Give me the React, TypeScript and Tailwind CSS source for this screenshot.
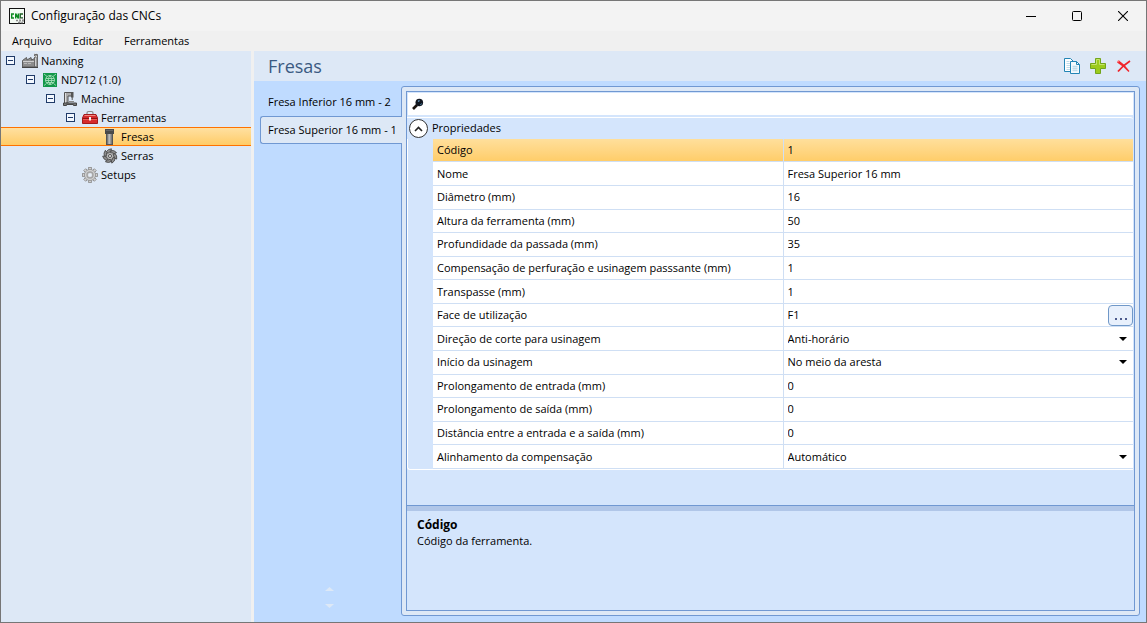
import { useState } from "react";
import type { ReactNode } from "react";

/* ─── Icons ─── */

function AppIcon() {
  return (
    <svg width="16" height="16" viewBox="0 0 16 16">
      <rect x="0.5" y="0.5" width="15" height="15" fill="#f4fbf4" stroke="#111" />
      <g fill="none" stroke="#0b8a1e" strokeWidth="1.4">
        <path d="M5 6H2.7v4H5" />
        <path d="M6.7 10.5v-5l2.6 5v-5" />
      </g>
      <path d="M14 6h-2.8v4H14" fill="none" stroke="#1c5e25" strokeWidth="1.4" />
      <path d="M7 12.5h8M9 14.5h6" stroke="#8a8a8a" strokeWidth="1.5" strokeDasharray="2 1" />
      <circle cx="12.5" cy="12.5" r="2" fill="none" stroke="#aaa" />
    </svg>
  );
}

function FactoryIcon() {
  return (
    <svg width="16" height="16" viewBox="0 0 16 16">
      <path
        d="M0.500 14V7.500L4.500 4.500L5 7L9 4.500L9.500 7L12.500 5.500V14Z"
        fill="#8d8d8d"
        stroke="#5d5d5d"
      />
      <path d="M1 8.500h12" stroke="#cfcfcf" />
      <path d="M2 10.500h3M6 10.500h3" stroke="#b9b9b9" />
      <path d="M12.500 14V1.500h3V14Z" fill="#9a9a9a" stroke="#6a6a6a" />
      <path d="M12 0.500h4M12 3.500h4" stroke="#d9d9d9" strokeDasharray="1 1" />
      <path d="M13.500 5v8" stroke="#d0d0d0" />
      <path d="M0 14.500h16" stroke="#444" />
    </svg>
  );
}

function ControllerIcon() {
  return (
    <svg width="14" height="14" viewBox="0 0 14 14">
      <rect width="14" height="14" fill="#13974a" />
      <g fill="none" stroke="#a5dcb8" strokeWidth="0.900">
        <circle cx="7" cy="7" r="4.500" />
        <path d="M3 5.500h8M2.500 7.500h9M3.500 9.500h7" />
        <path d="M7 2.500q-3.500 4.500 0 9M7 2.500q3.500 4.500 0 9" />
        <path d="M1 1l3 2.500M13 1l-3 2.500M1 12.500l2.500-2M13 12.500l-2.500-2" />
      </g>
    </svg>
  );
}

function MachineIcon() {
  return (
    <svg width="16" height="16" viewBox="0 0 16 16">
      <path d="M2.5 12V1.5h8V5H6v7Z" fill="#aaa" stroke="#555" />
      <path d="M3.5 2v10" stroke="#ddd" />
      <path d="M9 1h2.5v5.5h-2.5z" fill="#555" />
      <path d="M10.2 6v3" stroke="#555" />
      <path d="M7 10.5h5" stroke="#888" />
      <path d="M1.5 14.5v-2.500h13v2.500h-3v-1h-7v1Z" fill="#777" stroke="#444" />
    </svg>
  );
}

function ToolboxIcon() {
  return (
    <svg width="16" height="16" viewBox="0 0 16 16">
      <path d="M5 5V3q0-1.500 1.500-1.500h3q1.500 0 1.500 1.500v2" fill="none" stroke="#8a8a8a" strokeWidth="1.2" />
      <path d="M2 4.500h12L15.500 8v5.500h-15V8Z" fill="#d62a2c" stroke="#a3191d" />
      <path d="M2.500 5.500h11" stroke="#f08a80" />
      <path d="M1 8.500h14" stroke="#8f1216" />
      <path d="M1 9.500h14" stroke="#ee5a54" />
      <rect x="7" y="7" width="2" height="3.500" fill="#f3f3f3" />
    </svg>
  );
}

function MillIcon() {
  return (
    <svg width="16" height="16" viewBox="0 0 16 16">
      <defs>
        <linearGradient id="mill">
          <stop offset="0" stopColor="#4d4d4d" />
          <stop offset="0.45" stopColor="#c4c4c4" />
          <stop offset="1" stopColor="#5c5c5c" />
        </linearGradient>
      </defs>
      <rect x="4.5" y="4.5" width="6" height="11" fill="url(#mill)" stroke="#555" />
      <rect x="3" y="0" width="9" height="5" fill="#4a4a4a" />
      <path d="M4 1.500h7" stroke="#666" />
    </svg>
  );
}

function SawIcon() {
  const blades = [0, 51, 103, 154, 206, 257, 309];
  return (
    <svg width="16" height="16" viewBox="0 0 16 16">
      <circle cx="8" cy="8" r="5" fill="#a6a6a6" />
      {blades.map((a) => (
        <path
          key={a}
          d="M4.500 3.500Q6 1 9.500 0.800L8.800 3.300Q6.800 3.500 6.300 6Z"
          fill="#8f8f8f"
          stroke="#454545"
          strokeWidth="0.8"
          transform={`rotate(${a} 8 8)`}
        />
      ))}
      <circle cx="8" cy="8" r="3" fill="#b9b9b9" />
      <circle cx="8" cy="8" r="1.5" fill="#f2f2f2" stroke="#444" strokeWidth="0.9" />
    </svg>
  );
}

function GearIcon() {
  const teeth = [0, 45, 90, 135, 180, 225, 270, 315];
  return (
    <svg width="16" height="16" viewBox="0 0 16 16">
      {teeth.map((a) => (
        <rect
          key={a}
          x="6.600"
          y="0.500"
          width="2.800"
          height="4"
          fill="#d2d2d2"
          stroke="#929292"
          strokeWidth="0.9"
          transform={`rotate(${a} 8 8)`}
        />
      ))}
      <circle cx="8" cy="8" r="5.500" fill="#d2d2d2" stroke="#929292" strokeWidth="0.9" />
      <circle cx="8" cy="8" r="4.800" fill="#d2d2d2" />
      <circle cx="8" cy="8" r="3" fill="none" stroke="#a4a4a4" strokeWidth="1.4" />
      <circle cx="8" cy="8" r="1.800" fill="#e4edf8" />
    </svg>
  );
}

function CopyIcon() {
  return (
    <svg width="16" height="16" viewBox="0 0 16 16">
      <path d="M0.5 0.5h6l2.5 2.5v10.500h-8.500Z" fill="#fff" stroke="#2385b5" />
      <path d="M2.500 3.500h3M2.500 5.500h4M2.500 7.500h4M2.500 9.500h4M2.500 11.500h4" stroke="#bfdcea" />
      <path d="M6.5 3.5h6l3 3v9h-9Z" fill="#f4fafd" stroke="#2385b5" />
      <path d="M12.5 3.5v3h3" fill="none" stroke="#2385b5" />
      <path d="M8.5 8.5h5M8.5 10.5h5M8.5 12.5h5" stroke="#bfdcea" strokeWidth="1.3" />
    </svg>
  );
}

function PlusIcon() {
  return (
    <svg width="16" height="16" viewBox="0 0 16 16">
      <path
        d="M5.5 0.5h5v5h5v5h-5v5h-5v-5h-5v-5h5Z"
        fill="#9ccb1c"
        stroke="#72a51c"
      />
      <path d="M6.5 6.5V1.5h3v5h5" fill="none" stroke="#c5e56a" />
      <path d="M1.5 6.5h5" stroke="#c5e56a" />
    </svg>
  );
}

function DeleteIcon() {
  return (
    <svg width="16" height="16" viewBox="0 0 16 16">
      <path d="M1 4.500L3 2.500Q9 6.500 13.500 13L12.500 14Q7 8 1 4.500Z" fill="#f2262d" />
      <path d="M14 3Q7 7.500 2 13.500" fill="none" stroke="#ee2329" strokeWidth="1.8" />
      <path d="M1.500 4l1.500-1.500" stroke="#ff7a7e" strokeWidth="1.5" />
    </svg>
  );
}

function SearchIcon() {
  return (
    <svg width="12" height="12" viewBox="0 0 12 12">
      <path d="M1 11L5 7" stroke="#1b1410" strokeWidth="2.6" />
      <circle cx="7.3" cy="4.5" r="3.8" fill="#10151f" />
      <path d="M6 3.5l1.5-1" stroke="#6da1c9" strokeWidth="1.3" />
      <path d="M8 7l2-1.5" stroke="#3d6d8f" />
    </svg>
  );
}

function DropArrow() {
  return (
    <svg width="8" height="4" viewBox="0 0 8 4" className="pointer-events-none shrink-0">
      <path d="M0 0h8L4 4Z" fill="#000" />
    </svg>
  );
}

/* ─── Data ─── */

interface TreeNode {
  label: string;
  level: number;
  icon: ReactNode;
  leaf?: boolean;
}

const tree: TreeNode[] = [
  { label: "Nanxing", level: 0, icon: <FactoryIcon /> },
  { label: "ND712 (1.0)", level: 1, icon: <ControllerIcon /> },
  { label: "Machine", level: 2, icon: <MachineIcon /> },
  { label: "Ferramentas", level: 3, icon: <ToolboxIcon /> },
  { label: "Fresas", level: 4, icon: <MillIcon />, leaf: true },
  { label: "Serras", level: 4, icon: <SawIcon />, leaf: true },
  { label: "Setups", level: 3, icon: <GearIcon />, leaf: true },
];

const indents = ["pl-[5px]", "pl-[25px]", "pl-[45px]", "pl-[65px]", "pl-[85px]"];

interface Property {
  id: string;
  label: string;
  value: string;
  kind?: "select" | "dialog";
}

const properties: Property[] = [
  { id: "codigo", label: "Código", value: "1" },
  { id: "nome", label: "Nome", value: "Fresa Superior 16 mm" },
  { id: "diametro", label: "Diâmetro (mm)", value: "16" },
  { id: "altura", label: "Altura da ferramenta (mm)", value: "50" },
  { id: "profundidade", label: "Profundidade da passada (mm)", value: "35" },
  {
    id: "compensacao",
    label: "Compensação de perfuração e usinagem passsante (mm)",
    value: "1",
  },
  { id: "transpasse", label: "Transpasse (mm)", value: "1" },
  { id: "face", label: "Face de utilização", value: "F1", kind: "dialog" },
  { id: "direcao", label: "Direção de corte para usinagem", value: "Anti-horário", kind: "select" },
  { id: "inicio", label: "Início da usinagem", value: "No meio da aresta", kind: "select" },
  { id: "entrada", label: "Prolongamento de entrada (mm)", value: "0" },
  { id: "saida", label: "Prolongamento de saída (mm)", value: "0" },
  { id: "distancia", label: "Distância entre a entrada e a saída (mm)", value: "0" },
  { id: "alinhamento", label: "Alinhamento da compensação", value: "Automático", kind: "select" },
];

const tools = ["Fresa Inferior 16 mm - 2", "Fresa Superior 16 mm - 1"];

/* ─── Window chrome ─── */

function TitleBar() {
  return (
    <header className="flex h-[30px] shrink-0 items-center bg-[#f3f3f3] pl-2 text-black">
      <AppIcon />
      <h1 className="ml-1.5 text-[12px]">Configuração das CNCs</h1>
      <div className="ml-auto flex h-full">
        <button aria-label="Minimizar" className="flex w-[46px] items-center justify-center">
          <svg width="10" height="10" viewBox="0 0 10 10">
            <path d="M0 5.5h10" stroke="#000" />
          </svg>
        </button>
        <button aria-label="Maximizar" className="flex w-[46px] items-center justify-center">
          <svg width="10" height="10" viewBox="0 0 10 10">
            <rect x="0.5" y="0.5" width="9" height="9" rx="1" fill="none" stroke="#000" />
          </svg>
        </button>
        <button aria-label="Fechar" className="flex w-[46px] items-center justify-center">
          <svg width="10" height="10" viewBox="0 0 10 10">
            <path d="M0 0l10 10M10 0L0 10" stroke="#000" strokeWidth="1.1" />
          </svg>
        </button>
      </div>
    </header>
  );
}

function MenuBar() {
  return (
    <nav className="flex h-5 shrink-0 items-center gap-[21px] bg-[#f0f0f0] pl-[11px] text-[11px]">
      <button>Arquivo</button>
      <button>Editar</button>
      <button>Ferramentas</button>
    </nav>
  );
}

/* ─── Navigation tree ─── */

function Tree() {
  const [selected, setSelected] = useState("Fresas");

  return (
    <aside className="w-[250px] shrink-0 bg-[#dde8f6]">
      <ul role="tree">
        {tree.map((node) => (
          <li
            key={node.label}
            role="treeitem"
            aria-selected={node.label === selected}
            className={`flex h-[19px] items-center border-y ${indents[node.level]} ${
              node.label === selected
                ? "border-[#ff7200] bg-linear-to-b from-[#ffe0a0] to-[#ffcc66]"
                : "border-transparent"
            }`}
          >
            {node.leaf ? (
              <span className="w-[9px]" />
            ) : (
              <button
                aria-label={`Recolher ${node.label}`}
                className="flex size-[9px] items-center justify-center border border-[#1f3a68] bg-[#f3f8ff]"
              >
                <span className="h-px w-[5px] bg-[#1f3a68]" />
              </button>
            )}
            <button
              className="ml-[7px] flex items-center gap-[3px] text-[11px] leading-[17px]"
              onClick={() => setSelected(node.label)}
            >
              <span className="flex size-4 items-center justify-center">{node.icon}</span>
              {node.label}
            </button>
          </li>
        ))}
      </ul>
    </aside>
  );
}

/* ─── Tool list ─── */

function ToolTabs() {
  const [active, setActive] = useState(tools[1]);

  return (
    <div className="flex w-[147px] shrink-0 flex-col pl-1.5">
      <div role="tablist" className="relative z-10 -mr-px flex flex-col pt-[7px]">
        {tools.map((tool) => (
          <button
            key={tool}
            role="tab"
            aria-selected={tool === active}
            onClick={() => setActive(tool)}
            className={`h-7 whitespace-nowrap rounded-l-[3px] border border-r-0 pl-[7px] text-left text-[11px] ${
              tool === active ? "border-[#7098d2] bg-[#dde8f6]" : "mr-px border-transparent"
            }`}
          >
            {tool}
          </button>
        ))}
      </div>
      <div className="mt-auto mb-3.5 flex flex-col items-center gap-[13px] pr-0.5">
        <button aria-label="Rolar para cima">
          <svg width="9" height="4" viewBox="0 0 9 4">
            <path d="M4.5 0L9 4H0Z" fill="#dde8f6" />
          </svg>
        </button>
        <button aria-label="Rolar para baixo">
          <svg width="9" height="4" viewBox="0 0 9 4">
            <path d="M0 0h9L4.5 4Z" fill="#dde8f6" />
          </svg>
        </button>
      </div>
    </div>
  );
}

/* ─── Property grid ─── */

function PropertyValue({ property }: { property: Property }) {
  if (property.kind === "select") {
    return (
      <div className="flex items-center pr-1.5">
        <select
          id={property.id}
          defaultValue={property.value}
          className="min-w-0 flex-1 appearance-none bg-transparent leading-4 outline-none"
        >
          <option>{property.value}</option>
        </select>
        <DropArrow />
      </div>
    );
  }
  return (
    <div className="flex items-center">
      <input
        id={property.id}
        defaultValue={property.value}
        className="h-4 min-w-0 flex-1 bg-transparent leading-4 outline-none"
      />
      {property.kind === "dialog" && (
        <button
          aria-label="Selecionar face"
          className="-my-1 flex h-[21px] w-[25px] items-center justify-center gap-[3px] rounded-[4px] border border-[#7098c8] bg-[#e8f0fc] pt-2"
        >
          <span className="size-0.5 bg-[#4c5a8c]" />
          <span className="size-0.5 bg-[#4c5a8c]" />
          <span className="size-0.5 bg-[#4c5a8c]" />
        </button>
      )}
    </div>
  );
}

function PropertyGrid() {
  const [selected, setSelected] = useState("codigo");

  return (
    <div className="rounded-tr-[3px] border-t border-white">
      <div className="flex h-[21px] items-center gap-1 pl-0.5 text-[11px]">
        <button
          aria-label="Recolher Propriedades"
          className="relative z-10 flex size-[19px] items-center justify-center rounded-full border border-[#333] bg-white"
        >
          <svg width="9" height="6" viewBox="0 0 9 6">
            <path d="M1 5l3.5-3.500L8 5" fill="none" stroke="#222" strokeWidth="1.6" />
          </svg>
        </button>
        <h3>Propriedades</h3>
      </div>
      <div className="rounded-bl-[3px] border-b border-l border-white pl-[25px]">
        <table className="h-[330px] w-full table-fixed border-collapse text-[11px] leading-4">
          <tbody>
            {properties.map((p) => (
              <tr
                key={p.id}
                onClick={() => setSelected(p.id)}
                className={`border-b border-[#cfdff4] ${
                  p.id === selected ? "bg-linear-to-b from-[#ffdf9b] to-[#ffcd69]" : "bg-white"
                }`}
              >
                <th scope="row" className="border-r border-[#cfdff4] py-0 pl-1 text-left font-normal">
                  <label htmlFor={p.id}>{p.label}</label>
                </th>
                <td className="py-0 pl-1">
                  <PropertyValue property={p} />
                </td>
              </tr>
            ))}
          </tbody>
        </table>
      </div>
    </div>
  );
}

function ToolPanel() {
  return (
    <section className="flex min-w-0 flex-1 flex-col rounded-[3px] border border-[#7098d2] bg-[#dde8f6] p-1">
      <div className="flex flex-1 flex-col border border-[#7098d2] bg-[#d4e5fc]">
        <div className="mx-px mt-px flex h-[22px] items-center bg-white pl-1">
          <SearchIcon />
          <input
            aria-label="Pesquisar"
            className="ml-1 h-full min-w-0 flex-1 bg-transparent text-[11px] outline-none"
          />
        </div>
        <div className="mt-0.5 mr-px flex-1">
          <PropertyGrid />
        </div>
        <div className="h-1.5 border-t border-[#7098d2] bg-[#b0c6e8]" />
        <div className="h-[99px] px-2.5 pt-1.5 text-[11px] leading-4">
          <h4 className="text-[12px] font-bold">Código</h4>
          <p>Código da ferramenta.</p>
        </div>
      </div>
    </section>
  );
}

/* ─── Main window ─── */

export default function App() {
  return (
    <div className="flex h-screen flex-col border border-[#767676] bg-[#f0f0f0] font-['Open_Sans','Noto_Sans',sans-serif] text-black">
      <TitleBar />
      <MenuBar />
      <div className="flex min-h-0 flex-1 gap-[3px]">
        <Tree />
        <main className="flex min-w-0 flex-1 flex-col bg-[#bfdbff]">
          <div className="flex h-[30px] shrink-0 items-center bg-[#dde8f6] px-3.5">
            <h2 className="text-[18px] text-[#3b5a82]">Fresas</h2>
            <div className="ml-auto flex gap-2.5">
              <button aria-label="Duplicar">
                <CopyIcon />
              </button>
              <button aria-label="Adicionar">
                <PlusIcon />
              </button>
              <button aria-label="Excluir">
                <DeleteIcon />
              </button>
            </div>
          </div>
          <div className="flex min-h-0 flex-1 pr-1.5">
            <ToolTabs />
            <div className="flex min-w-0 flex-1 pt-[5px] pb-1.5">
              <ToolPanel />
            </div>
          </div>
        </main>
      </div>
    </div>
  );
}
